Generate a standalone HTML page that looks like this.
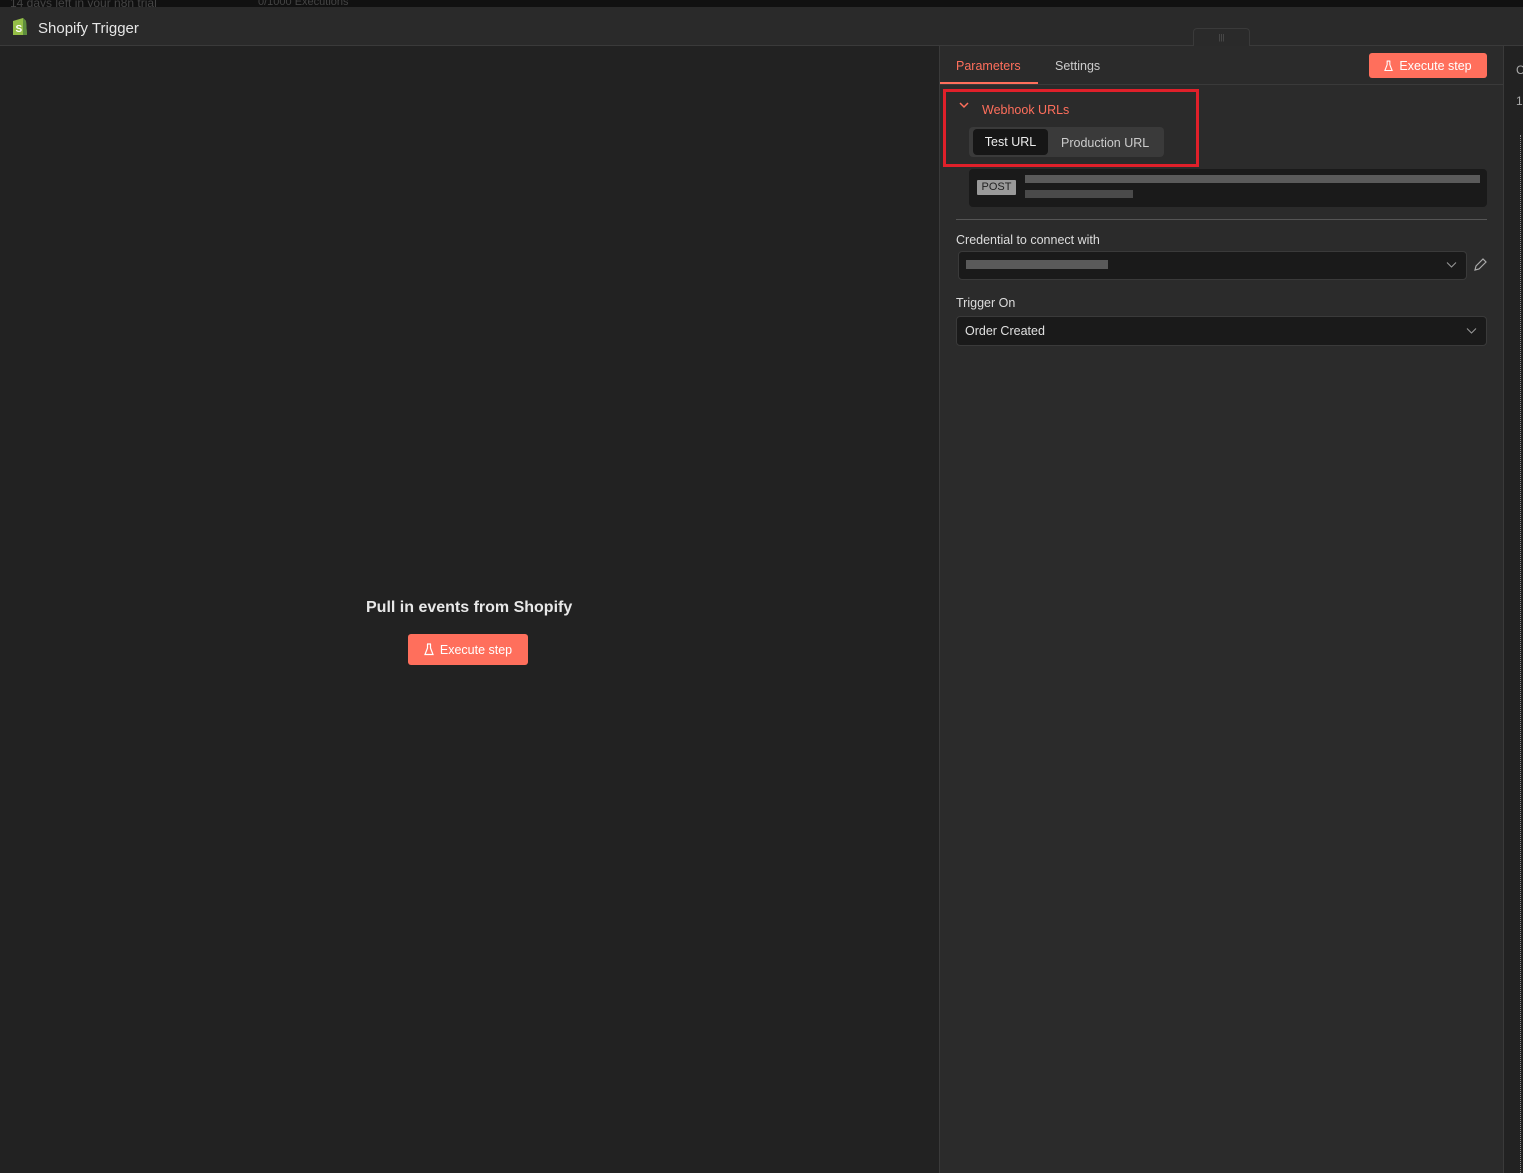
<!DOCTYPE html>
<html><head><style>
*{box-sizing:border-box;margin:0;padding:0}
body{width:1523px;height:1173px;overflow:hidden;background:#222;font-family:"Liberation Sans",sans-serif;position:relative;color:#ddd}
.abs{position:absolute}
.btn{position:absolute;background:#ff6f5c;color:#fff;border-radius:3px;font-size:12.5px;display:flex;align-items:center;justify-content:center;gap:6px}
</style></head><body>
<div class="abs" style="left:0;top:0;width:1523px;height:7px;background:#111;overflow:hidden">
<div class="abs" style="left:10px;top:-4px;font-size:12px;color:#444">14 days left in your n8n trial</div>
<div class="abs" style="left:258px;top:-4px;font-size:11px;color:#444">0/1000 Executions</div></div>
<div class="abs" style="left:0;top:7px;width:1523px;height:39px;background:#2a2a2a;border-bottom:1px solid #3a3a3a"></div>
<svg class="abs" style="left:10px;top:15px" width="20" height="22" viewBox="0 0 20 22"><path d="M3 6 L13 3 L16 6 L17 20 L3 20 Z" fill="#95bf47"/><path d="M13 3 L16 6 L17 20 L13 20Z" fill="#5e8e3e"/><text x="5.5" y="17" font-size="10" font-weight="bold" fill="#fff" font-family="Liberation Sans">S</text></svg>
<div class="abs" style="left:38px;top:20px;font-size:15px;color:#e6e6e6">Shopify Trigger</div>
<div class="abs" style="left:1193px;top:28px;width:57px;height:18px;background:#2a2a2a;border:1px solid #3a3a3a;border-bottom:none;border-radius:4px 4px 0 0;color:#555;font-size:8px;text-align:center;line-height:18px">|||</div>
<div class="abs" style="left:0;top:46px;width:939px;height:1127px;background:#222"></div>
<div class="abs" style="left:366px;top:599px;font-size:16px;font-weight:bold;color:#e8e8e8">Pull in events from Shopify</div>
<div class="btn" style="left:408px;top:634px;width:120px;height:31px"><svg width="10" height="13" viewBox="0 0 10 13"><path d="M3 1h4M3.5 1v4L1 11.5h8L6.5 5V1" fill="none" stroke="#fff" stroke-width="1.2"/></svg>Execute step</div>
<div class="abs" style="left:939px;top:46px;width:565px;height:1127px;background:#2b2b2b;border-left:1px solid #3a3a3a;border-right:1px solid #3a3a3a"></div>
<div class="abs" style="left:940px;top:84px;width:563px;height:1px;background:#3a3a3a"></div>
<div class="abs" style="left:956px;top:59px;font-size:12.5px;color:#ff6f5c">Parameters</div>
<div class="abs" style="left:940px;top:82px;width:98px;height:2px;background:#ff6f5c"></div>
<div class="abs" style="left:1055px;top:59px;font-size:12.5px;color:#ccc">Settings</div>
<div class="btn" style="left:1369px;top:53px;width:118px;height:25px"><svg width="9" height="12" viewBox="0 0 10 13"><path d="M3 1h4M3.5 1v4L1 11.5h8L6.5 5V1" fill="none" stroke="#fff" stroke-width="1.2"/></svg>Execute step</div>
<div class="abs" style="left:943px;top:89px;width:256px;height:78px;border:3px solid #e0202a"></div>
<svg class="abs" style="left:959px;top:102px" width="10" height="7" viewBox="0 0 10 7"><path d="M1 1l4 4 4-4" fill="none" stroke="#ff6f5c" stroke-width="1.5"/></svg>
<div class="abs" style="left:982px;top:103px;font-size:12.5px;color:#ff6f5c">Webhook URLs</div>
<div class="abs" style="left:969px;top:127px;width:195px;height:30px;background:#3a3a3a;border-radius:4px"></div>
<div class="abs" style="left:973px;top:129px;width:75px;height:26px;background:#161616;border-radius:4px;color:#eee;font-size:12.5px;text-align:center;line-height:27px">Test URL</div>
<div class="abs" style="left:1061px;top:136px;font-size:12.5px;color:#ccc">Production URL</div>
<div class="abs" style="left:969px;top:169px;width:518px;height:38px;background:#1a1a1a;border-radius:4px"></div>
<div class="abs" style="left:977px;top:180px;width:39px;height:15px;background:#9a9a9a;color:#222;font-size:11px;text-align:center;line-height:15px;border-radius:1px">POST</div>
<div class="abs" style="left:1025px;top:175px;width:455px;height:8px;background:#5a5a5a"></div>
<div class="abs" style="left:1025px;top:190px;width:108px;height:8px;background:#4a4a4a"></div>
<div class="abs" style="left:956px;top:219px;width:531px;height:1px;background:#555"></div>
<div class="abs" style="left:956px;top:233px;font-size:12.5px;color:#ddd">Credential to connect with</div>
<div class="abs" style="left:958px;top:251px;width:509px;height:29px;background:#1a1a1a;border:1px solid #3a3a3a;border-radius:4px"></div>
<div class="abs" style="left:966px;top:260px;width:142px;height:9px;background:#5a5a5a"></div>
<svg class="abs" style="left:1446px;top:262px" width="11" height="6" viewBox="0 0 11 6"><path d="M1 .5l4.5 4.5 4.5-4.5" fill="none" stroke="#999" stroke-width="1"/></svg>
<svg class="abs" style="left:1473px;top:257px" width="14" height="15" viewBox="0 0 14 15"><path d="M2 13l1-4 7-7 3 3-7 7z" fill="none" stroke="#aaa" stroke-width="1.2"/></svg>
<div class="abs" style="left:956px;top:296px;font-size:12.5px;color:#ddd">Trigger On</div>
<div class="abs" style="left:956px;top:316px;width:531px;height:30px;background:#1a1a1a;border:1px solid #3a3a3a;border-radius:4px"></div>
<div class="abs" style="left:965px;top:324px;font-size:12.5px;color:#e0e0e0">Order Created</div>
<svg class="abs" style="left:1466px;top:328px" width="11" height="6" viewBox="0 0 11 6"><path d="M1 .5l4.5 4.5 4.5-4.5" fill="none" stroke="#999" stroke-width="1"/></svg>
<div class="abs" style="left:1504px;top:46px;width:19px;height:1127px;background:#222"></div>
<div class="abs" style="left:1516px;top:63px;font-size:12px;color:#aaa">C</div>
<div class="abs" style="left:1516px;top:94px;font-size:12px;color:#aaa">1</div>
<div class="abs" style="left:1520px;top:135px;width:0;height:1038px;border-left:1px dotted #888"></div>
</body></html>
